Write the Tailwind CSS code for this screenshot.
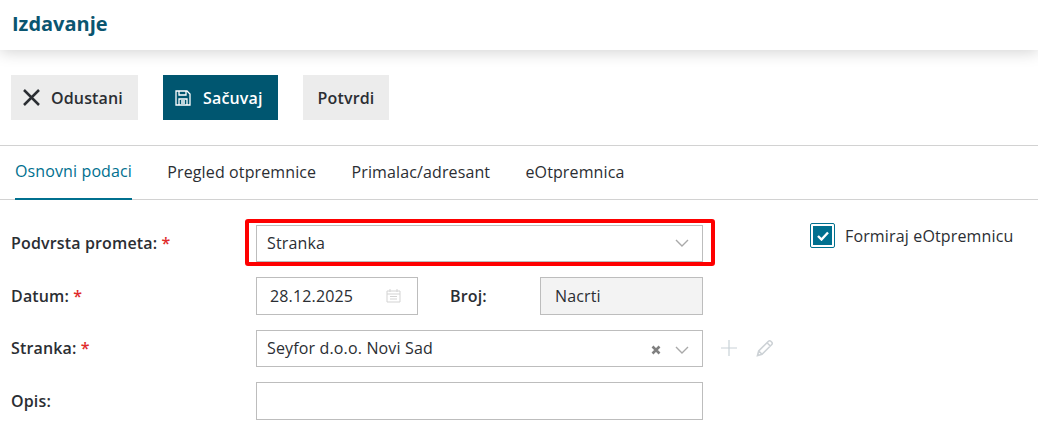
<!DOCTYPE html>
<html lang="en">
<head>
  <meta charset="UTF-8" />
  <title>Izdavanje</title>
  <script src="https://cdn.jsdelivr.net/npm/@tailwindcss/browser@4"></script>
</head>
<body class="bg-white font-['Open_Sans',sans-serif] text-[#2b2e33] tracking-[0.15px] overflow-hidden">
  <div class="relative w-[1038px] h-[434px] overflow-hidden">
    <!-- header -->
    <header class="h-[50px] flex items-center pl-3 pb-[2px] bg-white shadow-[0_2px_16px_rgba(0,0,0,0.18)] relative">
      <h1 class="text-[20px] font-bold text-[#0a5570] tracking-normal">Izdavanje</h1>
    </header>

    <!-- toolbar -->
    <div class="flex gap-[25px] pl-[11px] pt-[25px] pb-[25px] border-b border-[#d2d2d2] h-[96px]">
      <button class="h-[45px] w-[127px] bg-[#ececec] flex items-center pl-[12px] gap-[11px] text-[16px] font-semibold">
        <svg class="w-[17px] h-[17px]" viewBox="0 0 17 17" fill="none" stroke="#2b2e33" stroke-width="2.5"><path d="M1 1 16 16M16 1 1 16"/></svg>
        Odustani
      </button>
      <button class="h-[45px] w-[115px] bg-[#005670] text-white flex items-center pl-[12px] gap-[12px] text-[16px] font-semibold">
        <svg class="w-[16px] h-[16px]" viewBox="0 0 16 16" fill="none" stroke="#fff" stroke-width="1.3"><path d="M1 1h11l3 3v11H1z"/><path d="M4 1v4h7V1M4 15V9h8v6M6 11h4M6 13h4"/></svg>
        Sačuvaj
      </button>
      <button class="h-[45px] w-[86px] bg-[#ececec] text-[16px] font-semibold">Potvrdi</button>
    </div>

    <!-- tabs -->
    <nav class="flex h-[54px] pl-[15px] gap-[35.300px] border-b border-[#d2d2d2] text-[16px] tracking-[0.12px]">
      <a class="h-[54px] pb-[2px] flex items-center border-b-2 border-[#00708f] text-[#00708f]">Osnovni podaci</a>
      <a class="h-[54px] pb-[2px] flex items-center">Pregled otpremnice</a>
      <a class="h-[54px] pb-[2px] flex items-center">Primalac/adresant</a>
      <a class="h-[54px] pb-[2px] flex items-center">eOtpremnica</a>
    </nav>

    <!-- form -->
    <div class="flex pt-[25px]">
      <div class="w-[810px] flex flex-col">
        <div class="flex items-center h-[37px] mb-[15px]">
          <label class="w-[245px] pl-[11px] pb-[2px] text-[16px] font-semibold">Podvrsta prometa: <span class="text-[#e02b2b]">*</span></label>
          <div class="ml-[11px] w-[447px] h-[37px] border border-[#bdbdbd] flex items-center pl-[10px] pr-[13px] pb-[1px] justify-between text-[16px]">
            Stranka
            <svg class="w-[14px] h-[8px]" viewBox="0 0 14 8" fill="none" stroke="#a9a9a9" stroke-width="1.4"><path d="M1 1l6 6 6-6"/></svg>
          </div>
        </div>
        <div class="flex items-center h-[38px] mb-[15px]">
          <label class="w-[245px] pl-[11px] text-[16px] font-semibold">Datum: <span class="text-[#e02b2b]">*</span></label>
          <div class="ml-[11px] w-[162px] h-[38px] border border-[#bdbdbd] flex items-center pl-[13px] pr-[16px] justify-between text-[16px]">
            28.12.2025
            <svg class="w-[15px] h-[15px] -mt-[2px]" viewBox="0 0 15 15" fill="none" stroke="#d3d3d3" stroke-width="1"><path d="M1 3h13v11H1zM1 6h13M4 1v3M11 1v3M4 8.500h7M4 11h7"/></svg>
          </div>
          <label class="w-[122px] pl-[32px] text-[16px] font-semibold">Broj:</label>
          <div class="w-[163px] h-[38px] border border-[#bdbdbd] bg-[#f3f3f3] flex items-center pl-[14px] text-[16px]">Nacrti</div>
        </div>
        <div class="flex items-center h-[37px] mb-[15px]">
          <label class="w-[245px] pl-[11px] pb-[2px] text-[16px] font-semibold">Stranka: <span class="text-[#e02b2b]">*</span></label>
          <div class="ml-[11px] w-[447px] h-[37px] border border-[#bdbdbd] flex items-center pl-[10px] pr-[13px] text-[16px]">
            <span class="flex-1 pb-[1px]">Seyfor d.o.o. Novi Sad</span>
            <svg class="w-[10px] h-[10px] mr-[14px] mt-[2px]" viewBox="0 0 10 10" fill="none" stroke="#808080" stroke-width="2.6"><path d="M1.500 1.500l7 7M8.500 1.500l-7 7"/></svg>
            <svg class="w-[14px] h-[8px] mt-[2px]" viewBox="0 0 14 8" fill="none" stroke="#a9a9a9" stroke-width="1.4"><path d="M1 1l6 6 6-6"/></svg>
          </div>
          <svg class="w-[16px] h-[16px] ml-[18px] -mt-[1px]" viewBox="0 0 16 16" fill="none" stroke="#c9d2d8" stroke-width="1.2"><path d="M8 0v16M0 8h16"/></svg>
          <svg class="w-[18px] h-[18px] ml-[19px] -mt-[1px]" viewBox="0 0 18 18" fill="none" stroke="#cdd2d6" stroke-width="1.6"><path d="M1.500 16.500l1.200-4.500L12.500 2.200a1.600 1.600 0 0 1 2.300 0l1 1a1.600 1.600 0 0 1 0 2.300L6 15.300zM11 3.700l3.300 3.300M2.700 12l3.300 3.300"/></svg>
        </div>
        <div class="flex items-center h-[38px]">
          <label class="w-[245px] pl-[11px] text-[16px] font-semibold">Opis:</label>
          <div class="ml-[11px] w-[447px] h-[38px] border border-[#bdbdbd]"></div>
        </div>
      </div>

      <div class="flex items-center h-[25px] -mt-[2px] gap-[10px]">
        <span class="w-[25px] h-[25px] rounded-[2px] border border-[#00708f] bg-white p-[2px] block">
          <span class="w-full h-full bg-[#00708f] flex items-center justify-center">
            <svg class="w-[12px] h-[10px]" viewBox="0 0 12 10" fill="none" stroke="#fff" stroke-width="2.4"><path d="M1 5l3.500 3.500L11 1.500"/></svg>
          </span>
        </span>
        <span class="text-[16px] whitespace-nowrap">Formiraj eOtpremnicu</span>
      </div>
    </div>

    <!-- red annotation frame -->
    <div class="absolute left-[245px] top-[219px] w-[470px] h-[47px] border-[4px] border-[#fe0000] rounded-[3px]"></div>
  </div>
</body>
</html>
